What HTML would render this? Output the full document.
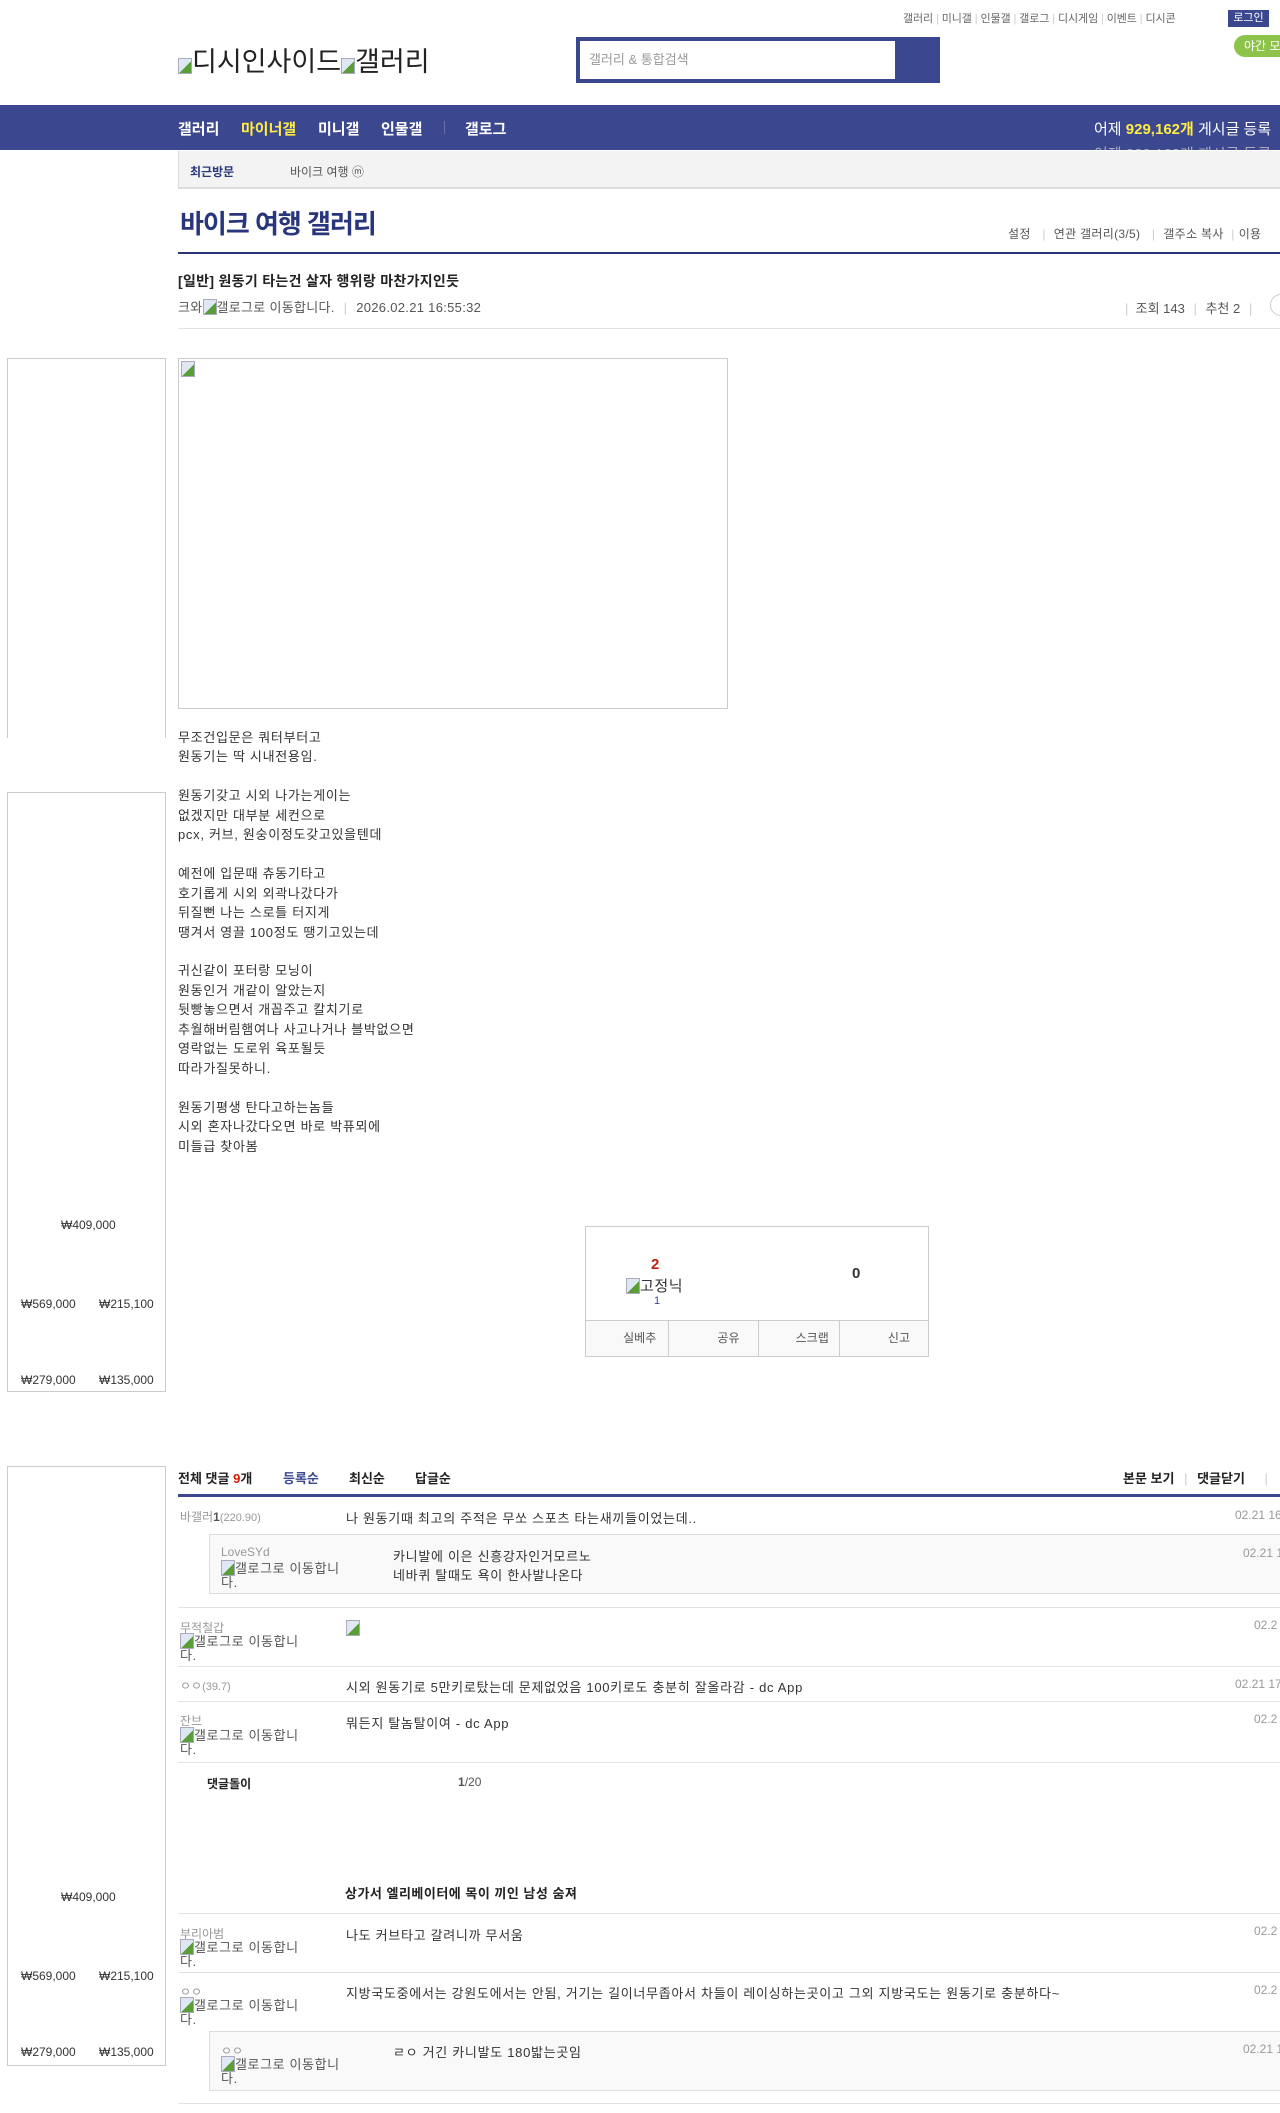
<!DOCTYPE html>
<html><head><meta charset="utf-8">
<style>
*{margin:0;padding:0;box-sizing:border-box}
body{width:1280px;height:2113px;overflow:hidden;position:relative;background:#fff;font-family:"Liberation Sans","Noto Sans CJK KR",sans-serif;color:#333;font-size:13px}
.a{position:absolute;white-space:nowrap}
.t{letter-spacing:0.7px}
.bi{display:inline-block;width:14px;height:16px;vertical-align:-3px;background:linear-gradient(135deg,#dfe8f2 55%,#5a9e3a 55%);border:1px solid #aab}
.nav a{color:#fff;font-weight:bold;font-size:15px}
.hr{position:absolute;left:178px;right:0;height:1px;background:#e3e3e3}
.nick{color:#999;font-size:12px}
.alt{color:#555;white-space:normal;width:125px;line-height:13px;font-size:13px;letter-spacing:0.6px}
.dt{color:#999;font-size:12px}
.adbox{position:absolute;left:7px;width:159px;border:1px solid #ccc}
.pr{position:absolute;font-size:12px;color:#333}
</style></head><body>
<div class="a" style="left:903px;top:10px;font-size:11px;color:#666;letter-spacing:-0.1px">갤러리 <span style="color:#ccc">|</span> 미니갤 <span style="color:#ccc">|</span> 인물갤 <span style="color:#ccc">|</span> 갤로그 <span style="color:#ccc">|</span> 디시게임 <span style="color:#ccc">|</span> 이벤트 <span style="color:#ccc">|</span> 디시콘</div>
<div class="a" style="left:1228px;top:10px;width:41px;height:17px;background:#3b4890;color:#fff;font-size:11px;text-align:center;line-height:17px">로그인</div>
<div class="a" style="left:1234px;top:35px;width:60px;height:22px;background:#8ec34a;border-radius:11px;color:#fff;font-size:12px;line-height:22px;padding-left:10px">야간 모드</div>
<div class="a" style="left:178px;top:40px;font-size:27px;color:#222"><span class="bi"></span>디시인사이드<span class="bi"></span>갤러리</div>
<div class="a" style="left:576px;top:37px;width:364px;height:46px;background:#3b4890"></div>
<div class="a" style="left:580px;top:41px;width:315px;height:38px;background:#fff;color:#999;font-size:13px;line-height:38px;padding-left:9px">갤러리 &amp; 통합검색</div>
<div class="a nav" style="left:0;top:105px;width:1280px;height:45px;background:#3b4890"></div>
<div class="a nav" style="left:178px;top:118px"><a>갤러리</a></div>
<div class="a nav" style="left:241px;top:118px"><a style="color:#ffeb44">마이너갤</a></div>
<div class="a nav" style="left:318px;top:118px"><a>미니갤</a></div>
<div class="a nav" style="left:381px;top:118px"><a>인물갤</a></div>
<div class="a" style="left:444px;top:121px;width:1px;height:13px;background:#6670aa"></div>
<div class="a nav" style="left:465px;top:118px"><a>갤로그</a></div>
<div class="a" style="left:1094px;top:118px;color:#fff;font-size:15px">어제 <b style="color:#ffeb44">929,162개</b> 게시글 등록</div>
<div class="a" style="left:1094px;top:143px;color:#aab;font-size:15px;height:7px;overflow:hidden">어제 929,162개 게시글 등록</div>
<div class="a" style="left:178px;top:151px;width:1102px;height:38px;background:#f3f3f3;border-bottom:2px solid #ddd;border-left:1px solid #ddd"></div>
<div class="a" style="left:190px;top:163px;font-size:12px;font-weight:bold;color:#29367c">최근방문</div>
<div class="a" style="left:290px;top:163px;font-size:12px;color:#555">바이크 여행 ⓜ</div>
<div class="a" style="left:180px;top:204px;font-size:26px;color:#29367c;font-weight:bold;letter-spacing:-1px">바이크 여행 갤러리</div>
<div class="a" style="left:1008px;top:225px;font-size:12px;color:#555;letter-spacing:0.3px">설정 <span style="color:#ccc;margin:0 8px">|</span>연관 갤러리(3/5) <span style="color:#ccc;margin:0 8px">|</span>갤주소 복사 <span style="color:#ccc;margin:0 4px">|</span>이용</div>
<div class="a" style="left:178px;top:252px;width:1102px;height:2px;background:#29367c"></div>
<div class="a" style="left:178px;top:271px;font-size:14px;font-weight:bold;color:#222;letter-spacing:0.3px">[일반] 원동기 타는건 살자 행위랑 마찬가지인듯</div>
<div class="a t" style="left:178px;top:297px;font-size:13px;color:#555;letter-spacing:0.3px">크와<span class="bi"></span>갤로그로 이동합니다. <span style="color:#ccc;margin:0 5px">|</span> 2026.02.21 16:55:32</div>
<div class="a" style="left:1125px;top:298px;font-size:13px;color:#555"><span style="color:#ccc">|</span> &nbsp;조회 143 <span style="color:#ccc;margin:0 5px">|</span> 추천 2 <span style="color:#ccc;margin:0 5px">|</span></div>
<div class="a" style="left:1270px;top:294px;width:22px;height:22px;border:1px solid #ccc;border-radius:11px"></div>
<div class="hr" style="top:328px"></div>

<div class="adbox" style="top:358px;height:380px;border-bottom:none"></div>
<div class="adbox" style="top:792px;height:600px"></div>
<div class="pr" style="left:61px;top:1218px">₩409,000</div>
<div class="pr" style="left:21px;top:1297px">₩569,000</div>
<div class="pr" style="left:99px;top:1297px">₩215,100</div>
<div class="pr" style="left:21px;top:1373px">₩279,000</div>
<div class="pr" style="left:99px;top:1373px">₩135,000</div>
<div class="adbox" style="top:1466px;height:600px"></div>
<div class="pr" style="left:61px;top:1890px">₩409,000</div>
<div class="pr" style="left:21px;top:1969px">₩569,000</div>
<div class="pr" style="left:99px;top:1969px">₩215,100</div>
<div class="pr" style="left:21px;top:2045px">₩279,000</div>
<div class="pr" style="left:99px;top:2045px">₩135,000</div>

<div class="a" style="left:178px;top:358px;width:550px;height:351px;border:1px solid #ccc"><span class="bi" style="position:absolute;left:2px;top:2px"></span></div>
<div class="a t" style="left:178px;top:728px;font-size:13px;line-height:19.45px;color:#333;white-space:pre">무조건입문은 쿼터부터고
원동기는 딱 시내전용임.

원동기갖고 시외 나가는게이는
없겠지만 대부분 세컨으로
pcx, 커브, 원숭이정도갖고있을텐데

예전에 입문때 츄동기타고
호기롭게 시외 외곽나갔다가
뒤질뻔 나는 스로틀 터지게
땡겨서 영끌 100정도 땡기고있는데

귀신같이 포터랑 모닝이
원동인거 개같이 알았는지
뒷빵놓으면서 개꼽주고 칼치기로
추월해버림햄여나 사고나거나 블박없으면
영락없는 도로위 육포될듯
따라가질못하니.

원동기평생 탄다고하는놈들
시외 혼자나갔다오면 바로 박퓨뫼에
미들급 찾아봄</div>

<div class="a" style="left:585px;top:1226px;width:344px;height:131px;border:1px solid #ccc"></div>
<div class="a" style="left:585px;top:1320px;width:344px;height:37px;border:1px solid #ccc;background:#f9f9f9;display:flex;font-size:12px;color:#555">
<div style="flex:1;border-right:1px solid #ccc;text-align:right;padding-right:12px;line-height:35px">실베추</div>
<div style="flex:1;border-right:1px solid #ccc;text-align:right;padding-right:18px;line-height:35px">공유</div>
<div style="flex:1;border-right:1px solid #ccc;text-align:right;padding-right:10px;line-height:35px">스크랩</div>
<div style="flex:1;text-align:right;padding-right:18px;line-height:35px">신고</div></div>
<div class="a" style="left:651px;top:1256px;font-size:15px;font-weight:bold;color:#c0200e">2</div>
<div class="a" style="left:626px;top:1275px;font-size:15px;color:#333;letter-spacing:0.6px"><span class="bi"></span>고정닉</div>
<div class="a" style="left:654px;top:1295px;font-size:11px;color:#3b4890">1</div>
<div class="a" style="left:852px;top:1265px;font-size:15px;font-weight:bold;color:#333">0</div>

<div class="a" style="left:178px;top:1468px;font-size:13px;font-weight:bold;color:#222">전체 댓글 <span style="color:#d31900">9</span>개</div>
<div class="a" style="left:283px;top:1468px;font-size:13px;font-weight:bold;color:#3b4890">등록순</div>
<div class="a" style="left:349px;top:1468px;font-size:13px;font-weight:bold;color:#222">최신순</div>
<div class="a" style="left:415px;top:1468px;font-size:13px;font-weight:bold;color:#222">답글순</div>
<div class="a" style="left:1123px;top:1468px;font-size:13px;font-weight:bold;color:#222">본문 보기 <span style="color:#ccc;font-weight:normal;margin:0 6px">|</span> 댓글닫기 <span style="color:#ccc;font-weight:normal;margin-left:16px">|</span></div>
<div class="a" style="left:178px;top:1494px;width:1102px;height:3px;background:#3b4890"></div>

<div class="a nick" style="left:180px;top:1508px">바갤러<b style="color:#555">1</b><span style="font-size:11px">(220.90)</span></div>
<div class="a t" style="left:346px;top:1508px">나 원동기때 최고의 주적은 무쏘 스포츠 타는새끼들이었는데..</div>
<div class="a dt" style="left:1235px;top:1508px">02.21 16</div>
<div class="a" style="left:209px;top:1534px;width:1071px;height:60px;background:#f9f9f9;border:1px solid #ddd;border-right:none"></div>
<div class="a nick" style="left:221px;top:1545px">LoveSYd</div>
<div class="a alt" style="left:221px;top:1560px"><span class="bi"></span>갤로그로 이동합니다.</div>
<div class="a t" style="left:393px;top:1546px">카니발에 이은 신흥강자인거모르노</div>
<div class="a t" style="left:393px;top:1565px">네바퀴 탈때도 욕이 한사발나온다</div>
<div class="a dt" style="left:1243px;top:1546px">02.21 1</div>
<div class="hr" style="top:1607px"></div>

<div class="a nick" style="left:180px;top:1619px">무적철갑</div>
<div class="a alt" style="left:180px;top:1633px"><span class="bi"></span>갤로그로 이동합니다.</div>
<div class="a" style="left:346px;top:1620px"><span class="bi"></span></div>
<div class="a dt" style="left:1254px;top:1618px">02.2</div>
<div class="hr" style="top:1666px"></div>

<div class="a nick" style="left:180px;top:1677px">ㅇㅇ<span style="font-size:11px">(39.7)</span></div>
<div class="a t" style="left:346px;top:1677px">시외 원동기로 5만키로탔는데 문제없었음 100키로도 충분히 잘올라감 - dc App</div>
<div class="a dt" style="left:1235px;top:1677px">02.21 17</div>
<div class="hr" style="top:1701px"></div>

<div class="a nick" style="left:180px;top:1712px">잔브</div>
<div class="a alt" style="left:180px;top:1727px"><span class="bi"></span>갤로그로 이동합니다.</div>
<div class="a t" style="left:346px;top:1713px">뭐든지 탈놈탈이여 - dc App</div>
<div class="a dt" style="left:1254px;top:1712px">02.2</div>
<div class="hr" style="top:1762px"></div>

<div class="a" style="left:207px;top:1775px;font-size:12px;font-weight:bold;color:#222">댓글돌이</div>
<div class="a" style="left:458px;top:1775px;font-size:12px;color:#555"><b>1</b>/20</div>
<div class="a" style="left:345px;top:1883px;font-size:13px;font-weight:bold;color:#222;letter-spacing:0.5px">상가서 엘리베이터에 목이 끼인 남성 숨져</div>
<div class="hr" style="top:1913px"></div>

<div class="a nick" style="left:180px;top:1925px">부리아범</div>
<div class="a alt" style="left:180px;top:1939px"><span class="bi"></span>갤로그로 이동합니다.</div>
<div class="a t" style="left:346px;top:1925px">나도 커브타고 갈려니까 무서움</div>
<div class="a dt" style="left:1254px;top:1924px">02.2</div>
<div class="hr" style="top:1972px"></div>

<div class="a nick" style="left:180px;top:1983px">ㅇㅇ</div>
<div class="a alt" style="left:180px;top:1997px"><span class="bi"></span>갤로그로 이동합니다.</div>
<div class="a t" style="left:346px;top:1983px">지방국도중에서는 강원도에서는 안됨, 거기는 길이너무좁아서 차들이 레이싱하는곳이고 그외 지방국도는 원동기로 충분하다~</div>
<div class="a dt" style="left:1254px;top:1983px">02.2</div>
<div class="a" style="left:209px;top:2031px;width:1071px;height:60px;background:#f9f9f9;border:1px solid #ddd;border-right:none"></div>
<div class="a nick" style="left:221px;top:2042px">ㅇㅇ</div>
<div class="a alt" style="left:221px;top:2056px"><span class="bi"></span>갤로그로 이동합니다.</div>
<div class="a t" style="left:393px;top:2042px">ㄹㅇ 거긴 카니발도 180밟는곳임</div>
<div class="a dt" style="left:1243px;top:2042px">02.21 1</div>
<div class="hr" style="top:2103px"></div>
</body></html>
